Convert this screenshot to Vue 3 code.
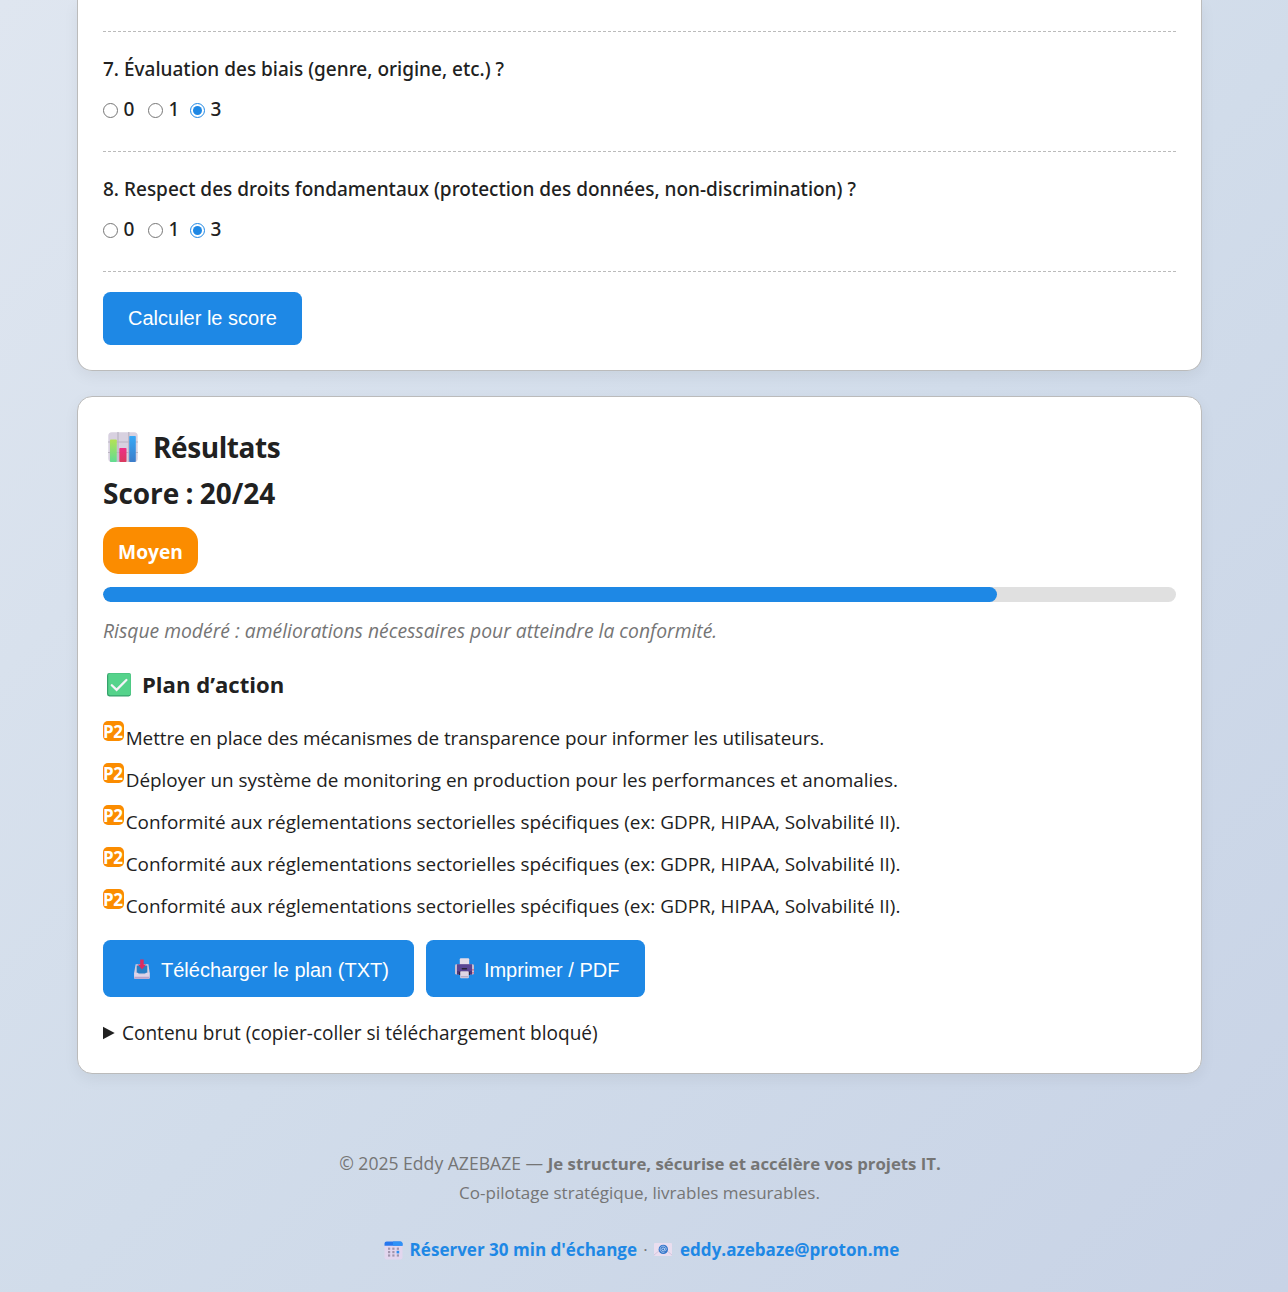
<script setup>
import { reactive } from 'vue'

const questions = reactive([
  { id: 7, text: '7. Évaluation des biais (genre, origine, etc.) ?', value: 3 },
  { id: 8, text: '8. Respect des droits fondamentaux (protection des données, non-discrimination) ?', value: 3 }
])
const choices = [0, 1, 3]
const score = 20
const total = 24
const sector = 'Conformité aux réglementations sectorielles spécifiques (ex: GDPR, HIPAA, Solvabilité II).'
const actions = [
  'Mettre en place des mécanismes de transparence pour informer les utilisateurs.',
  'Déployer un système de monitoring en production pour les performances et anomalies.',
  sector,
  sector,
  sector
]
</script>

<template>
  <div class="page">
    <main class="container">
      <section class="card form-card">
        <div class="previous"></div>
        <div v-for="q in questions" :key="q.id" class="question">
          <p class="label">{{ q.text }}</p>
          <div class="choices">
            <label v-for="c in choices" :key="c" class="choice">
              <input v-model="q.value" type="radio" :name="'q' + q.id" :value="c" /><span>{{ c }}</span>
            </label>
          </div>
        </div>
        <button class="btn calc">Calculer le score</button>
      </section>

      <section class="card results">
        <h2>
          <svg class="ico-chart" viewBox="0 0 30 30" width="30" height="30">
            <defs>
              <linearGradient id="g1" x1="0" y1="0" x2="0" y2="1"><stop offset="0" stop-color="#b4e255" /><stop offset="1" stop-color="#62dc92" /></linearGradient>
              <linearGradient id="g2" x1="0" y1="0" x2="0" y2="1"><stop offset="0" stop-color="#ee2f86" /><stop offset="1" stop-color="#d93a5e" /></linearGradient>
              <linearGradient id="g3" x1="0" y1="0" x2="0" y2="1"><stop offset="0" stop-color="#37a8f6" /><stop offset="1" stop-color="#3c7cc9" /></linearGradient>
            </defs>
            <rect x=".3" y=".3" width="29.4" height="29.7" rx="3.5" fill="#d8d1e0" />
            <path d="M10 0v30M20.8 0v30M0 10h30M0 20.5h30" stroke="#bab4c2" stroke-width="1.2" />
            <rect x="2" y="7.5" width="6.8" height="22.5" rx=".8" fill="url(#g1)" />
            <rect x="11.3" y="16" width="7.2" height="14" rx=".8" fill="url(#g2)" />
            <rect x="21.2" y="4" width="6.6" height="26" rx=".8" fill="url(#g3)" />
          </svg>
          <span>Résultats</span>
        </h2>
        <p class="score">Score : {{ score }}/{{ total }}</p>
        <div class="badge">Moyen</div>
        <div class="progress"><div class="bar" :style="{ width: (score / total) * 100 + '%' }"></div></div>
        <p class="risk">Risque modéré : améliorations nécessaires pour atteindre la conformité.</p>

        <h3>
          <svg class="ico-check" viewBox="0 0 24 24" width="24" height="24">
            <rect width="24" height="23.5" rx="2.4" fill="#36a26c" />
            <rect x="1.2" y=".2" width="22.6" height="22" rx="2" fill="#55d38b" />
            <path d="M4.8 12.2l4.8 4.7L19.4 7" fill="none" stroke="#f5f3f8" stroke-width="2.3" stroke-linecap="round" />
          </svg>
          <span>Plan d’action</span>
        </h3>
        <ul class="actions">
          <li v-for="(a, i) in actions" :key="i"><span class="prio">P2</span><span class="text">{{ a }}</span></li>
        </ul>

        <div class="buttons">
          <button class="btn">
            <svg class="ico-down" viewBox="0 0 18 20" width="18" height="20">
              <path d="M2.6 5.2h12.8l1.2 8.3v5.3a1 1 0 0 1-1 1H2.2a1 1 0 0 1-1-1v-5.3z" fill="#d6cddf" />
              <path d="M3.7 6.5h10.6v8H3.7z" fill="#287fc5" />
              <path d="M1.2 13.7h3.6l1.5 2.1h5.2l1.5-2.1h3.6v5a1 1 0 0 1-1 1H2.2a1 1 0 0 1-1-1z" fill="#ded4e8" />
              <path d="M1.4 17.7h15v1a1 1 0 0 1-1 1h-13a1 1 0 0 1-1-1z" fill="#b9a4ca" />
              <path d="M7.2.4h3.5v5h2.4L9 10.5 4.8 5.4h2.4z" fill="#dc2b60" />
            </svg>
            <span>Télécharger le plan (TXT)</span>
          </button>
          <button class="btn print">
            <svg class="ico-print" viewBox="0 0 21 21" width="21" height="21">
              <rect x="5.8" y=".3" width="9.4" height="7.7" rx="1" fill="#e4dce9" />
              <rect x="1" y="6.2" width="19" height="10.4" rx="1.4" fill="#c8bdd0" />
              <path d="M3 6.2h15v10.2H3z" fill="#5a4594" />
              <path d="M3 13h15v3.4H3z" fill="#49377c" />
              <rect x="7.6" y="10" width="5.6" height="1.5" rx=".7" fill="#282238" />
              <path d="M5 14h11v3H5z" fill="#302642" />
              <rect x="6.2" y="13.3" width="8.6" height="7" rx=".8" fill="#ded5e4" />
              <path d="M7 18.8h7" stroke="#a99cb8" />
              <rect x="18.4" y="11.2" width="1.2" height="1.3" fill="#d73960" />
              <rect x="18.4" y="14.2" width="1.2" height="1.3" fill="#d73960" />
            </svg>
            <span>Imprimer / PDF</span>
          </button>
        </div>
        <div class="raw">
          <svg viewBox="0 0 12 14" width="12" height="14"><path d="M0 .7l11.7 6.3L0 13.3z" fill="#212121" /></svg>
          <span>Contenu brut (copier-coller si téléchargement bloqué)</span>
        </div>
      </section>

      <footer>
        <p class="line"><span class="copy">© 2025 Eddy AZEBAZE —</span> <strong>Je structure, sécurise et accélère vos projets IT.</strong></p>
        <p class="line sub">Co-pilotage stratégique, livrables mesurables.</p>
        <p class="links">
          <svg class="ico-cal" viewBox="0 0 19 19" width="19" height="19">
            <rect x=".5" y=".4" width="18" height="18" rx="2.2" fill="#e2d6ee" />
            <path d="M.5 4.8V2.6A2.2 2.2 0 0 1 2.7.4h13.6a2.2 2.2 0 0 1 2.2 2.2v2.2z" fill="#2678ee" />
            <path d="M9 4.8V.4h7.3a2.2 2.2 0 0 1 2.2 2.2v2.2z" fill="#2f92f7" />
            <g fill="#a195ad">
              <rect x="4" y="6.6" width="2.2" height="2.2" /><rect x="8.3" y="6.6" width="2.2" height="2.2" /><rect x="12.8" y="6.6" width="2.2" height="2.2" />
              <rect x="4" y="10" width="2.2" height="2.2" /><rect x="8.3" y="10" width="2.2" height="2.2" />
              <rect x="4" y="13.4" width="2.2" height="2.2" /><rect x="8.3" y="13.4" width="2.2" height="2.2" /><rect x="12.8" y="13.4" width="2.2" height="2.2" />
            </g>
            <rect x="12.6" y="9.8" width="2.6" height="2.6" fill="#2d8df0" />
          </svg>
          <a class="book">Réserver 30 min d'échange</a>
          <span class="dot">·</span>
          <svg class="ico-mail" viewBox="0 0 18 13" width="18" height="13">
            <rect width="18" height="13" rx="1" fill="#eadeef" />
            <path d="M0 12l6-5M18 12l-6-5" stroke="#d3c4dd" />
            <circle cx="9.3" cy="6.4" r="4.7" fill="#3476ca" />
            <circle cx="9.2" cy="6.4" r="1.4" fill="none" stroke="#c5d9f4" stroke-width=".9" />
            <path d="M10.7 5v1.8c0 1.2 1.6 1 1.6-.5A3.1 3.1 0 1 0 10.6 9" fill="none" stroke="#c5d9f4" stroke-width=".7" />
          </svg>
          <a class="mail">eddy.azebaze@proton.me</a>
        </p>
      </footer>
    </main>
  </div>
</template>

<style>
body { margin: 0; }
</style>

<style scoped>
* { box-sizing: border-box; }
.page {
  height: 1292px;
  overflow: hidden;
  background: linear-gradient(135deg, #dfe6f0 0%, #d1dcea 52%, #c8d3e6 100%);
  font-family: "Open Sans", "Noto Sans", sans-serif;
  font-size: 19px;
  color: #212121;
}
.container { width: 1125px; margin-left: 77px; }
p, h2, h3, ul { margin: 0; padding: 0; }
.card {
  padding: 25px;
  background: #fff;
  border: 1px solid #bbb;
  border-radius: 15px;
  box-shadow: 0 5px 15px rgba(0, 0, 0, 0.06);
}
.form-card { padding-top: 0; border-top: 0; border-radius: 0 0 15px 15px; }
.previous { height: 32px; border-bottom: 1px dashed #bbb; }
.question { height: 120px; padding-top: 22px; border-bottom: 1px dashed #bbb; font-family: "Noto Sans", sans-serif; font-weight: 500; }
.label { line-height: 30px; white-space: nowrap; }
.choices { display: flex; margin-top: 10px; line-height: 31px; }
.choice { display: flex; width: 45px; }
.choice:nth-child(2) { width: 42px; }
.choice input { width: 15px; height: 15px; margin: 9px 5.5px 0 0; accent-color: #1e88e5; }
.btn {
  display: flex;
  align-items: center;
  height: 57px;
  padding: 0 25px;
  border: 0;
  border-radius: 7.5px;
  background: #1e88e5;
  color: #fff;
  font: 20px "Liberation Sans", Arial, sans-serif;
  white-space: nowrap;
}
.buttons .btn span { padding-top: 3px; }
.calc { height: 53px; margin-top: 20px; }

.results { margin-top: 25px; }
h2 { display: flex; align-items: center; height: 50px; font-size: 28px; letter-spacing: -0.42px; line-height: 50px; }
.ico-chart { margin: 0 15px 0 5px; }
.score { height: 40px; font-size: 28px; font-weight: 700; letter-spacing: -0.03px; word-spacing: -1px; line-height: 42px; }
.badge {
  width: 95px;
  height: 47px;
  margin-top: 15px;
  border-radius: 15px;
  background: #fb8c00;
  color: #fff;
  font-size: 19.2px;
  font-weight: 700;
  line-height: 49px;
  text-align: center;
}
.progress { height: 15px; margin-top: 13px; overflow: hidden; border-radius: 7.5px; background: #e0e0e0; }
.bar { height: 15px; border-radius: 7.5px; background: #1e88e5; }
.risk { margin-top: 14px; color: #757575; font-size: 19.32px; font-style: italic; line-height: 30px; }
h3 { display: flex; align-items: center; height: 31px; margin-top: 23px; font-size: 22.1px; line-height: 31px; }
.ico-check { margin: 0 11px 0 4px; }
.actions { margin-top: 17px; list-style: none; }
.actions li { display: flex; height: 42px; line-height: 42px; }
.prio {
  width: 20.5px;
  height: 20px;
  margin: 4px 2.2px 0 0;
  border-radius: 5px;
  background: #fb8c00;
  color: #fff;
  font-size: 17px;
  font-weight: 700;
  letter-spacing: -0.3px;
  line-height: 22px;
}
.text { font-size: 18.9px; white-space: nowrap; }
.actions li:first-child .text { letter-spacing: -0.08px; }
.buttons { display: flex; gap: 12px; margin-top: 13px; }
.print { width: 219px; }
.ico-down { margin: 0 10px 0 5px; }
.ico-print { margin: 0 9px 0 3px; }
.raw { display: flex; align-items: center; height: 30px; margin-top: 21px; font-size: 19.05px; line-height: 30px; }
.raw svg { margin-right: 7px; }

footer { padding-top: 75px; color: #757575; text-align: center; line-height: 29px; }
.line { padding-left: 1px; font-size: 17.58px; }
.line strong { font-size: 16.8px; }
.sub { padding-left: 0; font-size: 17.03px; }
.links { display: flex; align-items: center; justify-content: center; height: 29px; margin-top: 28px; padding-left: 4px; }
.links a { color: #1e88e5; font-size: 17.05px; font-weight: 700; }
.ico-cal { margin: 2px 7px 0 0; }
.dot { width: 17px; font-size: 17px; }
.ico-mail { margin-right: 8px; }
</style>
